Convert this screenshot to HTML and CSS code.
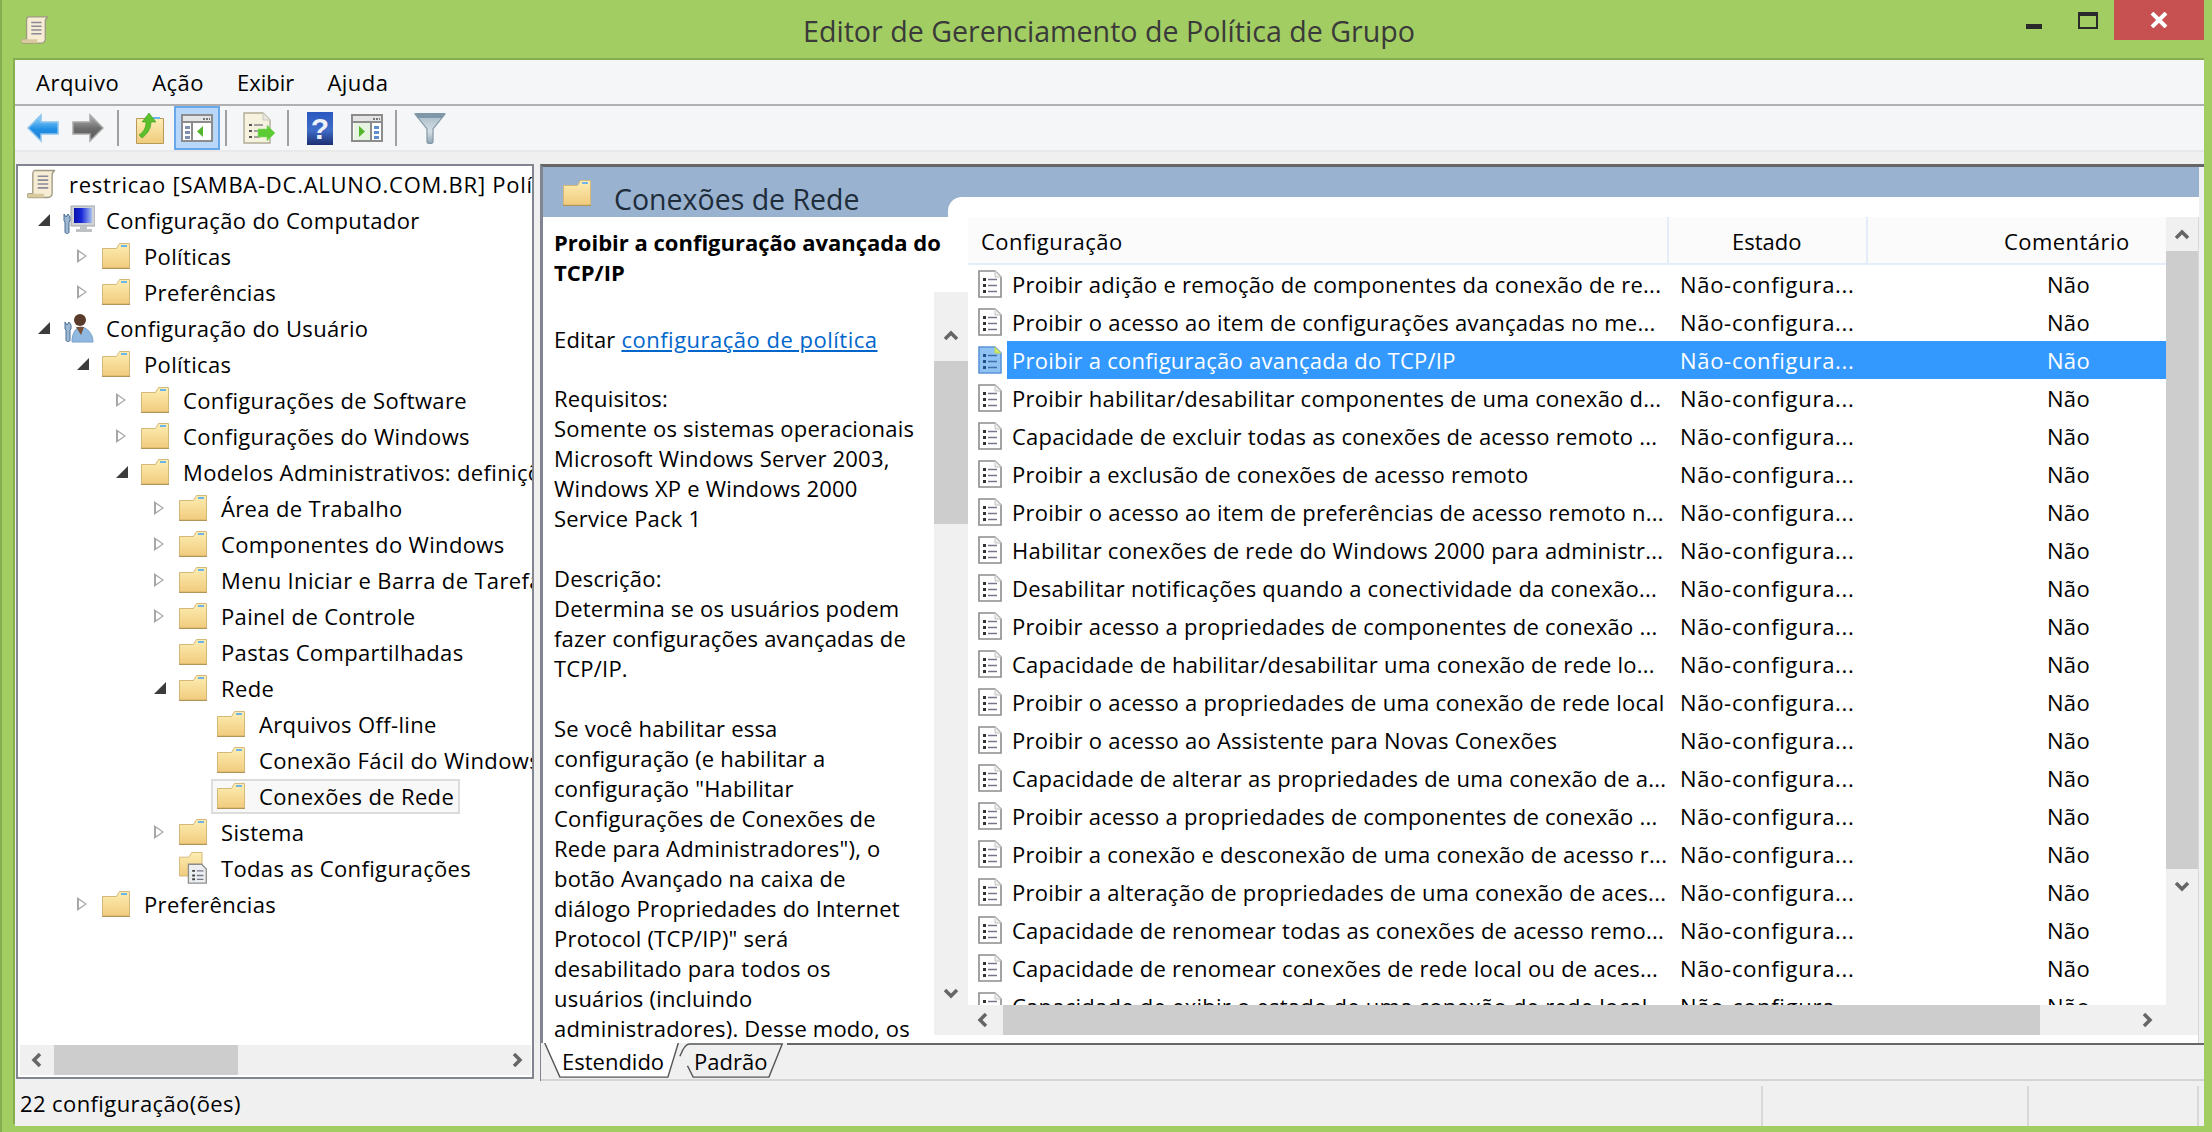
FILE: index.html
```html
<!DOCTYPE html>
<html lang="pt-BR">
<head>
    <meta charset="UTF-8">
    <title>Editor de Gerenciamento de Política de Grupo</title>
    <link rel="stylesheet" href="styles.css">
</head>
<body>
<svg class="defs" aria-hidden="true">
    <defs>
        <linearGradient id="gFolder" x1="0" y1="0" x2="0" y2="1">
            <stop offset="0" stop-color="#fdeeb4"/>
            <stop offset="1" stop-color="#f0cb7c"/>
        </linearGradient>
        <linearGradient id="gBack" x1="0" y1="0" x2="0" y2="1">
            <stop offset="0" stop-color="#a4dcfc"/>
            <stop offset=".55" stop-color="#1f8fe6"/>
            <stop offset="1" stop-color="#2a7fcc"/>
        </linearGradient>
        <linearGradient id="gFwd" x1="0" y1="0" x2="0" y2="1">
            <stop offset="0" stop-color="#b4b4b4"/>
            <stop offset=".55" stop-color="#6a6a6a"/>
            <stop offset="1" stop-color="#5a5a5a"/>
        </linearGradient>
        <linearGradient id="gFunnel" x1="0" y1="0" x2="0" y2="1">
            <stop offset="0" stop-color="#a9bcc9"/>
            <stop offset=".6" stop-color="#d4dfe6"/>
            <stop offset="1" stop-color="#8ea4b2"/>
        </linearGradient>
        <linearGradient id="gScreen" x1="0" y1="0" x2="1" y2="0">
            <stop offset="0" stop-color="#0a12a8"/>
            <stop offset=".4" stop-color="#1626d8"/>
            <stop offset="1" stop-color="#a8c0ee"/>
        </linearGradient>
        <symbol id="i-folder" viewBox="0 0 28 26">
            <path d="M.5 5.500h14l3-5h10v25H.5z" fill="url(#gFolder)" stroke="#d4b878"/>
            <path d="M19 2h6v2h-6z" fill="#6db4ea"/>
            <path d="M0 25.300h28" stroke="#a98d52"/>
        </symbol>
        <symbol id="i-doc" viewBox="0 0 24 28">
            <path d="M1 1h16l6 6v20H1z" fill="#fff" stroke="#8c8c8c" stroke-width="1.600"/>
            <path d="M17 1v6h6" fill="#eee" stroke="#c4c4c4"/>
            <path d="M5 8h3v3H5zM5 14h3v3H5zM5 20h3v3H5z" fill="#333"/>
            <path d="M10 9.500h9M10 15.500h9M10 21.500h9" stroke="#77778c" stroke-width="1.600"/>
        </symbol>
        <symbol id="i-doc-sel" viewBox="0 0 24 28">
            <path d="M1 1h16l6 6v20H1z" fill="#90c2f4" stroke="#5c94d8" stroke-width="1.600"/>
            <path d="M17 1v6h6" fill="#d8ea60" stroke="#b8d850"/>
            <path d="M5 8h3v3H5zM5 14h3v3H5zM5 20h3v3H5z" fill="#1c4f86"/>
            <path d="M10 9.500h9M10 15.500h9M10 21.500h9" stroke="#3f6ea8" stroke-width="1.600"/>
        </symbol>
        <symbol id="i-scroll" viewBox="0 0 30 30">
            <path d="M8 1h21c-2 1-3 3-3 5v19c0 2-2 4-4 4H2c-2 0-2-4 0-4h4V5c0-2 1-4 2-4z" fill="#f6edd4" stroke="#a09a84" stroke-width="1.400"/>
            <path d="M2 25h16c-1 1-1 3 0 4H2c-2 0-2-4 0-4z" fill="#d8ca9c"/>
            <path d="M11 7h11M11 11h11M11 15h11M11 19h11" stroke="#8a8a98" stroke-width="1.600"/>
        </symbol>
        <symbol id="i-computer" viewBox="0 0 32 30">
            <path d="M8 1h24v20H8z" fill="#cfd2d4" stroke="#a0a4a8"/>
            <path d="M11 3h18v15H11z" fill="url(#gScreen)"/>
            <path d="M17 21h7v3h5v3H13v-3h4z" fill="#bfc2c5"/>
            <path d="M1 9l2 3 2-3 2 3v4l-1 1v10c0 2-4 2-4 0V17l-1-1z" fill="#9cb8d4" stroke="#4d6f94"/>
        </symbol>
        <symbol id="i-user" viewBox="0 0 30 30">
            <circle cx="16" cy="7" r="6" fill="#5a3b2a"/>
            <path d="M8 29c0-9 4-15 9-15s12 6 12 15z" fill="#8fb9e0" stroke="#7aa0c6"/>
            <path d="M12 14h8l-3 8z" fill="#7a4f36"/>
            <path d="M1 9l2 3 2-3 2 3v4l-1 1v10c0 2-4 2-4 0V17l-1-1z" fill="#9cb8d4" stroke="#4d6f94"/>
        </symbol>
        <symbol id="i-all" viewBox="0 0 34 34">
            <path d="M.5 5.500h10l3-5h11v25H.5z" fill="url(#gFolder)" stroke="#d4b878"/>
            <path d="M10 13h14l5 5v15H10z" fill="#eceff1" stroke="#8c8c8c" stroke-width="1.400"/>
            <path d="M14 19h3v2h-3zM14 24h3v2h-3zM14 28h3v2h-3z" fill="#444"/>
            <path d="M19 20h7M19 25h7M19 29h7" stroke="#77778c" stroke-width="1.400"/>
        </symbol>
        <symbol id="i-panel" viewBox="0 0 32 28">
            <path d="M1 1h30v26H1z" fill="#fff" stroke="#8c8c8c" stroke-width="2"/>
            <path d="M2 2h28v5H2z" fill="#e4e4e4"/>
            <path d="M22 4h2v2h-2zM25 4h2v2h-2zM28 4h1v2h-1z" fill="#777"/>
            <path d="M2 8h28" stroke="#8c8c8c" stroke-width="2"/>
        </symbol>
    </defs>
</svg>

<div class="window">
    <header class="titlebar">
        <svg class="title-icon"><use href="#i-scroll"/></svg>
        <span class="title-text">Editor de Gerenciamento de Política de Grupo</span>
        <div class="caption">
            <span class="cap-min"></span>
            <span class="cap-max"></span>
            <span class="cap-close">
                <svg width="18" height="16" viewBox="0 0 18 16"><path d="M2 1l14 14M16 1L2 15" stroke="#fff" stroke-width="4"/></svg>
            </span>
        </div>
    </header>

    <div class="client">
        <nav class="menubar">
            <span>Arquivo</span>
            <span>Ação</span>
            <span>Exibir</span>
            <span>Ajuda</span>
        </nav>

        <div class="toolbar">
            <svg class="tb tb-back" viewBox="0 0 32 30"><path d="M1 15L14 2v7h17v12H14v7z" fill="url(#gBack)" stroke="#8cc4ee" stroke-width="1.500"/></svg>
            <svg class="tb tb-fwd" viewBox="0 0 32 30"><path d="M31 15L18 2v7H1v12h17v7z" fill="url(#gFwd)" stroke="#a8a8a8" stroke-width="1.500"/></svg>
            <i class="sep sep-1"></i>
            <svg class="tb tb-up" viewBox="0 0 28 32">
                <path d="M.5 6.500h27v25H.5z" fill="url(#gFolder)" stroke="#b89a58"/>
                <path d="M17 5h7v2h-7z" fill="#6db4ea"/>
                <path d="M3 23c5-3 7-8 7-13H6l7-9 7 9h-5c0 7-4 12-9 16z" fill="#5cc02c" stroke="#3c9a20" stroke-width=".6"/>
            </svg>
            <span class="tb-active"><svg class="tb-panel" viewBox="0 0 32 28">
                <use href="#i-panel"/>
                <path d="M11 9h18v17H11z" fill="#fff"/>
                <path d="M11 9v17" stroke="#8c8c8c" stroke-width="2"/>
                <path d="M4 12h5v3H4zM4 17h5v3H4zM4 22h5v3H4z" fill="#7f8fb0"/>
                <path d="M22 12v11l-6-5.500z" fill="#52b52c"/>
            </svg></span>
            <i class="sep sep-2"></i>
            <svg class="tb tb-export" viewBox="0 0 32 32">
                <path d="M1 1h19l7 7v23H1z" fill="#f7f2de" stroke="#b0ac98" stroke-width="1.400"/>
                <path d="M20 1v7h7" fill="#e8e8e0" stroke="#c8c8bc"/>
                <path d="M6 12h3v2H6zM6 18h3v2H6zM6 24h3v2H6z" fill="#555"/>
                <path d="M11 13h9M11 19h6M11 25h6" stroke="#888" stroke-width="1.600"/>
                <path d="M32 21l-8-8v4h-9v8h9v4z" fill="#5ccb34" stroke="#8cdc70" stroke-width=".6"/>
            </svg>
            <i class="sep sep-3"></i>
            <span class="tb-help">?</span>
            <svg class="tb-panel tb-panel2" viewBox="0 0 32 28">
                <use href="#i-panel"/>
                <path d="M3 9h16v17H3z" fill="#e6f3e0"/>
                <path d="M20 9v17" stroke="#8c8c8c" stroke-width="2"/>
                <path d="M8 12v11l6-5.500z" fill="#52b52c"/>
                <path d="M23 12h5v3h-5zM23 17h5v3h-5zM23 22h5v3h-5z" fill="#5f8fd0"/>
            </svg>
            <i class="sep sep-4"></i>
            <svg class="tb tb-filter" viewBox="0 0 32 32">
                <path d="M1 2h30L19 17v13c0 2-6 2-6 0V17z" fill="url(#gFunnel)" stroke="#8298a6" stroke-width="1.200"/>
                <path d="M1 1h30l-3 5H4z" fill="#7f97a6"/>
            </svg>
        </div>
        <div class="strip"></div>

        <main class="main">
            <section class="tree">
                <div class="tree-body">
                    <div class="row root"><svg class="ic-root"><use href="#i-scroll"/></svg><span>restricao [SAMBA-DC.ALUNO.COM.BR] Polí</span></div>
                    <div class="row lv1"><i class="tw open"></i><svg class="ic-big"><use href="#i-computer"/></svg><span>Configuração do Computador</span></div>
                    <div class="row lv2"><i class="tw"></i><svg class="ic"><use href="#i-folder"/></svg><span>Políticas</span></div>
                    <div class="row lv2"><i class="tw"></i><svg class="ic"><use href="#i-folder"/></svg><span>Preferências</span></div>
                    <div class="row lv1"><i class="tw open"></i><svg class="ic-big"><use href="#i-user"/></svg><span>Configuração do Usuário</span></div>
                    <div class="row lv2"><i class="tw open"></i><svg class="ic"><use href="#i-folder"/></svg><span>Políticas</span></div>
                    <div class="row lv3"><i class="tw"></i><svg class="ic"><use href="#i-folder"/></svg><span>Configurações de Software</span></div>
                    <div class="row lv3"><i class="tw"></i><svg class="ic"><use href="#i-folder"/></svg><span>Configurações do Windows</span></div>
                    <div class="row lv3"><i class="tw open"></i><svg class="ic"><use href="#i-folder"/></svg><span>Modelos Administrativos: definições</span></div>
                    <div class="row lv4"><i class="tw"></i><svg class="ic"><use href="#i-folder"/></svg><span>Área de Trabalho</span></div>
                    <div class="row lv4"><i class="tw"></i><svg class="ic"><use href="#i-folder"/></svg><span>Componentes do Windows</span></div>
                    <div class="row lv4"><i class="tw"></i><svg class="ic"><use href="#i-folder"/></svg><span>Menu Iniciar e Barra de Tarefas</span></div>
                    <div class="row lv4"><i class="tw"></i><svg class="ic"><use href="#i-folder"/></svg><span>Painel de Controle</span></div>
                    <div class="row lv4"><i class="tw none"></i><svg class="ic"><use href="#i-folder"/></svg><span>Pastas Compartilhadas</span></div>
                    <div class="row lv4"><i class="tw open"></i><svg class="ic"><use href="#i-folder"/></svg><span>Rede</span></div>
                    <div class="row lv5"><i class="tw none"></i><svg class="ic"><use href="#i-folder"/></svg><span>Arquivos Off-line</span></div>
                    <div class="row lv5"><i class="tw none"></i><svg class="ic"><use href="#i-folder"/></svg><span>Conexão Fácil do Windows</span></div>
                    <div class="row lv5"><i class="tw none"></i><div class="tree-sel"><svg class="ic"><use href="#i-folder"/></svg><span>Conexões de Rede</span></div></div>
                    <div class="row lv4"><i class="tw"></i><svg class="ic"><use href="#i-folder"/></svg><span>Sistema</span></div>
                    <div class="row lv4"><i class="tw none"></i><svg class="ic-all"><use href="#i-all"/></svg><span>Todas as Configurações</span></div>
                    <div class="row lv2"><i class="tw"></i><svg class="ic"><use href="#i-folder"/></svg><span>Preferências</span></div>
                </div>
                <div class="hscroll tree-scroll">
                    <svg class="chev"><path d="M10 2L4 8l6 6" /></svg>
                    <div class="thumb tree-thumb"></div>
                    <svg class="chev chev-end"><path d="M4 2l6 6-6 6" /></svg>
                </div>
            </section>

            <section class="pane">
                <div class="band">
                    <svg class="ic"><use href="#i-folder"/></svg>
                    <span>Conexões de Rede</span>
                </div>
                <div class="pane-body">
                    <article class="desc">
                        <h1>Proibir a configuração avançada do<br>TCP/IP</h1>
                        <p class="edit">Editar <a href="#">configuração de política</a></p>
                        <p>Requisitos:<br>Somente os sistemas operacionais<br>Microsoft Windows Server 2003,<br>Windows XP e Windows 2000<br>Service Pack 1</p>
                        <p>Descrição:<br>Determina se os usuários podem<br>fazer configurações avançadas de<br>TCP/IP.</p>
                        <p>Se você habilitar essa<br>configuração (e habilitar a<br>configuração "Habilitar<br>Configurações de Conexões de<br>Rede para Administradores"), o<br>botão Avançado na caixa de<br>diálogo Propriedades do Internet<br>Protocol (TCP/IP)" será<br>desabilitado para todos os<br>usuários (incluindo<br>administradores). Desse modo, os</p>
                    </article>
                    <div class="pane-right">
                        <div class="pane-top">
                            <div class="vscroll desc-scroll">
                                <svg class="chev"><path d="M2 11l6-6 6 6" /></svg>
                                <div class="thumb desc-thumb"></div>
                                <svg class="chev chev-end"><path d="M2 4l6 6 6-6" /></svg>
                            </div>
                            <div class="list">
                                <div class="list-main">
                                    <div class="list-head">
                                        <span class="h-name">Configuração</span>
                                        <span class="h-state">Estado</span>
                                        <span class="h-note">Comentário</span>
                                    </div>
                                    <div class="list-rows">
                                        <div class="item"><svg class="doc"><use href="#i-doc"/></svg><span>Proibir adição e remoção de componentes da conexão de re...</span><span>Não-configura...</span><span>Não</span></div>
                                        <div class="item"><svg class="doc"><use href="#i-doc"/></svg><span>Proibir o acesso ao item de configurações avançadas no me...</span><span>Não-configura...</span><span>Não</span></div>
                                        <div class="item chosen"><svg class="doc"><use href="#i-doc-sel"/></svg><span>Proibir a configuração avançada do TCP/IP</span><span>Não-configura...</span><span>Não</span></div>
                                        <div class="item"><svg class="doc"><use href="#i-doc"/></svg><span>Proibir habilitar/desabilitar componentes de uma conexão d...</span><span>Não-configura...</span><span>Não</span></div>
                                        <div class="item"><svg class="doc"><use href="#i-doc"/></svg><span>Capacidade de excluir todas as conexões de acesso remoto ...</span><span>Não-configura...</span><span>Não</span></div>
                                        <div class="item"><svg class="doc"><use href="#i-doc"/></svg><span>Proibir a exclusão de conexões de acesso remoto</span><span>Não-configura...</span><span>Não</span></div>
                                        <div class="item"><svg class="doc"><use href="#i-doc"/></svg><span>Proibir o acesso ao item de preferências de acesso remoto n...</span><span>Não-configura...</span><span>Não</span></div>
                                        <div class="item"><svg class="doc"><use href="#i-doc"/></svg><span>Habilitar conexões de rede do Windows 2000 para administr...</span><span>Não-configura...</span><span>Não</span></div>
                                        <div class="item"><svg class="doc"><use href="#i-doc"/></svg><span>Desabilitar notificações quando a conectividade da conexão...</span><span>Não-configura...</span><span>Não</span></div>
                                        <div class="item"><svg class="doc"><use href="#i-doc"/></svg><span>Proibir acesso a propriedades de componentes de conexão ...</span><span>Não-configura...</span><span>Não</span></div>
                                        <div class="item"><svg class="doc"><use href="#i-doc"/></svg><span>Capacidade de habilitar/desabilitar uma conexão de rede lo...</span><span>Não-configura...</span><span>Não</span></div>
                                        <div class="item"><svg class="doc"><use href="#i-doc"/></svg><span>Proibir o acesso a propriedades de uma conexão de rede local</span><span>Não-configura...</span><span>Não</span></div>
                                        <div class="item"><svg class="doc"><use href="#i-doc"/></svg><span>Proibir o acesso ao Assistente para Novas Conexões</span><span>Não-configura...</span><span>Não</span></div>
                                        <div class="item"><svg class="doc"><use href="#i-doc"/></svg><span>Capacidade de alterar as propriedades de uma conexão de a...</span><span>Não-configura...</span><span>Não</span></div>
                                        <div class="item"><svg class="doc"><use href="#i-doc"/></svg><span>Proibir acesso a propriedades de componentes de conexão ...</span><span>Não-configura...</span><span>Não</span></div>
                                        <div class="item"><svg class="doc"><use href="#i-doc"/></svg><span>Proibir a conexão e desconexão de uma conexão de acesso r...</span><span>Não-configura...</span><span>Não</span></div>
                                        <div class="item"><svg class="doc"><use href="#i-doc"/></svg><span>Proibir a alteração de propriedades de uma conexão de aces...</span><span>Não-configura...</span><span>Não</span></div>
                                        <div class="item"><svg class="doc"><use href="#i-doc"/></svg><span>Capacidade de renomear todas as conexões de acesso remo...</span><span>Não-configura...</span><span>Não</span></div>
                                        <div class="item"><svg class="doc"><use href="#i-doc"/></svg><span>Capacidade de renomear conexões de rede local ou de aces...</span><span>Não-configura...</span><span>Não</span></div>
                                        <div class="item"><svg class="doc"><use href="#i-doc"/></svg><span>Capacidade de exibir o estado de uma conexão de rede local</span><span>Não-configura...</span><span>Não</span></div>
                                    </div>
                                </div>
                                <div class="vscroll list-scroll">
                                    <svg class="chev"><path d="M2 11l6-6 6 6" /></svg>
                                    <div class="thumb list-thumb"></div>
                                    <svg class="chev chev-end"><path d="M2 4l6 6 6-6" /></svg>
                                </div>
                            </div>
                        </div>
                        <div class="hscroll list-hscroll">
                            <svg class="chev"><path d="M10 2L4 8l6 6" /></svg>
                            <div class="thumb hs-thumb"></div>
                            <svg class="chev chev-end"><path d="M4 2l6 6-6 6" /></svg>
                        </div>
                    </div>
                </div>
                <div class="tabs">
                    <div class="tab tab-on">
                        <svg class="tab-shape" viewBox="0 0 142 38"><path d="M0 0L16 36H130L141 0" fill="#fff" stroke="#555" stroke-width="1.500"/></svg>
                        <span>Estendido</span>
                    </div>
                    <div class="tab tab-off">
                        <svg class="tab-shape" viewBox="0 0 110 38"><path d="M0 14Q5 1 10 1H108L94 36H14L8 24" fill="#f0f0f0" stroke="#555" stroke-width="1.500"/></svg>
                        <span>Padrão</span>
                    </div>
                    <div class="tab-rest"></div>
                </div>
            </section>
        </main>

        <footer class="status">
            <span class="st-text">22 configuração(ões)</span>
            <i class="st-cell st-a"></i>
            <i class="st-cell st-b"></i>
        </footer>
    </div>
</div>
</body>
</html>
```

FILE: styles.css
```css
* {
    padding: 0;
    margin: 0;
    box-sizing: border-box;
}

html, body {
    width: 2212px;
    height: 1132px;
    overflow: hidden;
}

body {
    background-color: #a2cd63;
    font-family: "Open Sans", "Liberation Sans", sans-serif;
    font-size: 22px;
    color: #000;
}

svg {
    display: block;
    flex: none;
    overflow: hidden;
}

.defs {
    position: absolute;
    width: 0;
    height: 0;
}

.window {
    height: 1132px;
    display: flex;
    flex-direction: column;
    padding: 0 8px 6px 13px;
    border-left: 2px solid #86ad4f;
}

/* title bar */
.titlebar {
    height: 60px;
    flex: none;
    display: flex;
    align-items: flex-start;
    position: relative;
    margin-left: -15px;
    margin-right: -8px;
}

.title-icon {
    width: 28px;
    height: 32px;
    margin: 14px 0 0 21px;
}

.title-text {
    position: absolute;
    left: 6px;
    right: 0;
    top: 11px;
    text-align: center;
    font-size: 28.600px;
    line-height: 40px;
    color: #3a3a3a;
}

.caption {
    margin-left: auto;
    margin-right: 8px;
    display: flex;
    position: relative;
}

.cap-min {
    width: 16px;
    height: 5px;
    margin: 24px 36px 0 0;
    background-color: #2a2a2a;
}

.cap-max {
    width: 20px;
    height: 17px;
    margin: 12px 16px 0 0;
    border: 2px solid #2a2a2a;
    border-top-width: 4px;
}

.cap-close {
    width: 90px;
    height: 40px;
    background-color: #c75050;
    display: flex;
    align-items: center;
    justify-content: center;
}

/* client */
.client {
    flex: 1;
    display: flex;
    flex-direction: column;
    min-height: 0;
    background-color: #f0f0f0;
    box-shadow: 0 -2px 0 #86ad4f, -2px -2px 0 #86ad4f;
}

.menubar {
    height: 46px;
    flex: none;
    display: flex;
    gap: 33px;
    align-items: center;
    padding: 0 0 1px 21px;
    background-color: #f5f6f7;
    border-bottom: 2px solid #b0b0b0;
    letter-spacing: .5px;
}

.menubar span:nth-child(3) {
    letter-spacing: 0;
}

.toolbar {
    height: 44px;
    flex: none;
    display: flex;
    align-items: center;
    background-color: #f5f6f7;
    padding-left: 12px;
}

.tb {
    width: 32px;
    height: 30px;
}

.tb-fwd {
    margin-left: 13px;
}

.sep {
    width: 2px;
    height: 36px;
    background-color: #a0a0a0;
    flex: none;
}

.sep-1 {
    margin-left: 13px;
}

.tb-up {
    width: 28px;
    height: 32px;
    margin-left: 17px;
}

.tb-active {
    width: 46px;
    height: 44px;
    margin-left: 10px;
    background-color: #b9d7f8;
    border: 2px solid #68a7e8;
    display: flex;
    align-items: center;
    justify-content: center;
}

.tb-panel {
    width: 32px;
    height: 28px;
}

.sep-2 {
    margin-left: 5px;
}

.tb-export {
    height: 32px;
    margin-left: 16px;
}

.sep-3 {
    margin-left: 12px;
}

.tb-help {
    width: 26px;
    height: 33px;
    margin-left: 18px;
    background: linear-gradient(#2a58c0, #3f6cc8 55%, #1c2f70);
    color: #eef1f8;
    font-family: "Liberation Sans", sans-serif;
    font-weight: bold;
    font-size: 30px;
    line-height: 33px;
    text-align: center;
}

.tb-panel2 {
    margin-left: 18px;
}

.sep-4 {
    margin-left: 12px;
}

.tb-filter {
    height: 32px;
    margin-left: 17px;
}

.strip {
    height: 14px;
    flex: none;
    border-top: 2px solid #e9e9e9;
}

/* main area */
.main {
    flex: 1;
    min-height: 0;
    display: flex;
    gap: 6px;
    padding-left: 1px;
}

.tree {
    width: 518px;
    flex: none;
    display: flex;
    flex-direction: column;
    background-color: #fff;
    border: 2px solid #80858f;
    margin-bottom: 2px;
}

.tree-body {
    flex: 1;
    min-height: 0;
    overflow: hidden;
    white-space: nowrap;
    letter-spacing: .35px;
}

.row {
    height: 36px;
    display: flex;
    align-items: center;
}

.row span {
    flex: none;
}

.root {
    padding-left: 9px;
    letter-spacing: .75px;
}

.ic-root {
    width: 29px;
    height: 30px;
    margin-right: 13px;
}

.lv1 { padding-left: 20px; }
.lv2 { padding-left: 59px; }
.lv3 { padding-left: 98px; }
.lv4 { padding-left: 136px; }
.lv5 { padding-left: 174px; }

.tw {
    width: 25px;
    height: 14px;
    flex: none;
    position: relative;
}

/* triangulo vazio = fechado, cheio = aberto */
.tw::before {
    content: "";
    position: absolute;
    left: 0;
    top: 0;
    border-style: solid;
    border-width: 7px 0 7px 10px;
    border-color: transparent transparent transparent #a6a6a6;
}

.tw::after {
    content: "";
    position: absolute;
    left: 2px;
    top: 3px;
    border-style: solid;
    border-width: 4px 0 4px 6px;
    border-color: transparent transparent transparent #fff;
}

.tw.open::before {
    top: 1px;
    border-width: 0 0 12px 12px;
    border-color: transparent transparent #3c3c3c transparent;
}

.tw.open::after,
.tw.none::before,
.tw.none::after {
    display: none;
}

.ic {
    width: 28px;
    height: 26px;
    margin-right: 14px;
}

.ic-big {
    width: 32px;
    height: 30px;
    margin: 0 11px 0 0;
}

.ic-all {
    width: 32px;
    height: 32px;
    margin-right: 10px;
}

.tree-sel {
    display: flex;
    align-items: center;
    height: 35px;
    margin-left: -6px;
    padding: 0 4px 0 4px;
    background-color: #f8f8f8;
    border: 2px solid #dcdcdc;
}

.hscroll {
    height: 30px;
    flex: none;
    display: flex;
    align-items: center;
    background-color: #f0f0f0;
}

.tree-scroll {
    margin: 0 1px 2px 2px;
}

.chev {
    width: 14px;
    height: 16px;
    flex: none;
    fill: none;
    stroke: #666;
    stroke-width: 3.500;
}

.thumb {
    background-color: #cdcdcd;
}

.tree-scroll .chev {
    margin: 0 10px;
}

.tree-thumb {
    width: 184px;
    height: 30px;
}

.tree-scroll .chev-end {
    margin-left: auto;
    margin-right: 7px;
}

.pane {
    flex: 1;
    min-width: 0;
    display: flex;
    flex-direction: column;
    border-top: 3px solid #666;
    border-left: 3px solid #80858f;
}

.band {
    height: 50px;
    flex: none;
    display: flex;
    align-items: flex-start;
    position: relative;
    margin-right: 5px;
    padding: 13px 0 0 20px;
    background-color: #98b2cf;
    font-size: 28.500px;
    line-height: 38px;
    color: #1e2c3a;
}

.band .ic {
    margin: 0 23px 0 0;
}

/* recorte branco da lista por cima da faixa azul */
.band::after {
    content: "";
    position: absolute;
    left: 405px;
    right: 0;
    top: 30px;
    bottom: 0;
    background-color: #fff;
    border-top-left-radius: 14px;
}

.pane-body {
    flex: 1;
    min-height: 0;
    display: flex;
    margin-right: 5px;
    background-color: #fff;
    border-right: 1px solid #d8d8d8;
}

/* o titulo em negrito passa um pouco da coluna, so corta em baixo */
.desc {
    width: 391px;
    flex: none;
    height: 822px;
    overflow-x: visible;
    overflow-y: clip;
    padding: 10px 0 0 11px;
    line-height: 30px;
    white-space: nowrap;
    letter-spacing: .2px;
}

.desc h1 {
    font-size: 22px;
    font-weight: bold;
    line-height: 30px;
    margin-bottom: 37px;
    letter-spacing: 0;
}

.desc p {
    margin-bottom: 30px;
}

.desc .edit {
    margin-bottom: 29px;
}

.desc a {
    color: #0066cc;
    letter-spacing: .5px;
}

.pane-right {
    flex: 1;
    min-width: 0;
    display: flex;
    flex-direction: column;
}

.pane-top {
    height: 788px;
    flex: none;
    display: flex;
}

.vscroll {
    width: 34px;
    flex: none;
    display: flex;
    flex-direction: column;
    align-items: center;
    background-color: #f0f0f0;
}

.vscroll .thumb {
    width: 100%;
}

.vscroll .chev {
    width: 16px;
    height: 16px;
    margin: 36px 0 17px;
}

.vscroll .chev-end {
    margin: auto 0 3px;
}

.desc-scroll {
    margin-top: 75px;
}

.desc-thumb {
    height: 163px;
}

.list {
    flex: 1;
    min-width: 0;
    display: flex;
}

.list-main {
    flex: 1;
    min-width: 0;
    display: flex;
    flex-direction: column;
}

.list-head {
    height: 48px;
    flex: none;
    display: grid;
    grid-template-columns: 699px 199px 1fr;
    align-items: center;
    background-color: #fbfbfb;
    border-bottom: 2px solid #e5eef8;
}

.list-head span {
    height: 100%;
    display: flex;
    align-items: center;
    padding-top: 2px;
    letter-spacing: .45px;
}

.h-name {
    padding-left: 13px;
}

.list-head .h-state {
    padding-left: 63px;
    border-left: 2px solid #e5eef8;
    letter-spacing: 0;
}

.h-note {
    padding-left: 136px;
    border-left: 2px solid #e5eef8;
}

.list-rows {
    flex: 1;
    min-height: 0;
    overflow: hidden;
}

.item {
    height: 38px;
    display: grid;
    grid-template-columns: 39px 660px 199px 1fr;
    align-items: center;
    white-space: nowrap;
    letter-spacing: .25px;
}

.doc {
    width: 24px;
    height: 28px;
    margin-left: 10px;
}

.item span {
    height: 38px;
    line-height: 39px;
    padding-left: 5px;
}

.item span:nth-child(3) {
    padding-left: 13px;
    letter-spacing: .7px;
}

.item span:nth-child(4) {
    padding-left: 181px;
    letter-spacing: .3px;
}

.chosen span {
    background-color: #3399ff;
    color: #fff;
}

.list-scroll {
    width: 32px;
}

.list-scroll .chev {
    margin: 10px 0 8px;
}

.list-thumb {
    height: 618px;
}

.list-hscroll {
    margin-bottom: 7px;
}

.list-hscroll .chev {
    margin: 0 13px 0 42px;
    width: 14px;
}

.hs-thumb {
    width: 1037px;
    height: 30px;
    flex: none;
}

.list-hscroll .chev-end {
    margin: 0 0 0 100px;
}

.tabs {
    height: 38px;
    flex: none;
    display: flex;
    margin-left: -2px;
    background-color: #f0f0f0;
    border-bottom: 2px solid #d4d4d4;
}

.tab {
    position: relative;
    height: 36px;
    flex: none;
    line-height: 36px;
}

/* o contorno do separador fica por baixo do texto */
.tab-shape {
    position: absolute;
    left: 0;
    top: 0;
    width: 100%;
    height: 36px;
}

.tab span {
    position: relative;
}

.tab-on {
    width: 142px;
    padding-left: 21px;
}

.tab-off {
    width: 110px;
    margin-left: -6px;
    padding-left: 17px;
}

.tab-rest {
    flex: 1;
    border-top: 2px solid #666;
}

/* status bar */
.status {
    height: 45px;
    flex: none;
    display: flex;
    align-items: center;
    padding: 0 0 0 5px;
    background-color: #f0f0f0;
    letter-spacing: .4px;
}

.st-text {
    width: 1741px;
    flex: none;
    line-height: 47px;
}

.st-cell {
    height: 40px;
    margin-top: 4px;
    flex: none;
    border-left: 2px solid #d8d8d8;
}

.st-a {
    width: 266px;
}

.st-b {
    width: 172px;
    border-right: 2px solid #d8d8d8;
}
```
